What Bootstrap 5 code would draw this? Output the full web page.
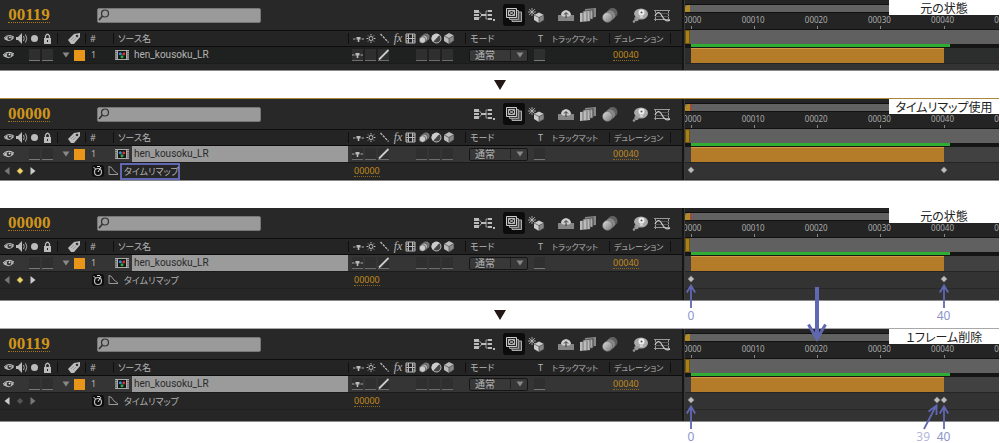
<!DOCTYPE html>
<html lang="ja">
<head>
<meta charset="utf-8">
<meta name="viewport" content="width=device-width, initial-scale=1">
<title>タイムリマップ</title>
<link href="https://cdn.jsdelivr.net/npm/bootstrap@5.3.0/dist/css/bootstrap.min.css" rel="stylesheet">
<style>
:root{--amber:#c08a1c;--note:#6068b2;--ink:#b4b4b4}
body{font-family:"Noto Sans","Noto Sans CJK JP",sans-serif;font-size:9px;line-height:12px;color:var(--ink);background:#fff;overflow-x:hidden}
svg{display:block;flex:none}
button{color:inherit}
.jp{font-family:"Noto Sans CJK JP",sans-serif;font-feature-settings:"palt"}
.panel{position:relative;display:flex;margin-right:1px;background:#262626;border-bottom:1px solid #8a8a8a}
.panel.edge-gold{border-top:1px solid #a98a3c}
.panel.edge-gray{border-top:1px solid #a8a8a8}
.over{z-index:2}
.outline-side{flex:0 0 684px;border-right:2px solid #151515}
.tall .outline-side{padding-bottom:11px}
.toolbar{height:31px;border-bottom:1px solid #0e0e0e;background:#282828;padding-left:8px}
.code{width:42px;font:bold 17px/15px "Liberation Serif",serif;color:#cf951b;border:0;border-bottom:1px dotted #a87818;background:none;padding:0}
.finder{width:164px;height:15px;margin-left:47px;background:#9a9a9a;border-radius:2px;border:1px solid #777;color:#222}
.finder input{min-width:0;border:0;background:none;font-size:9px;outline:0;padding:0}
.tools{margin-left:auto;padding-right:9px}
.tool{border:0;background:none;padding:0;width:22px;height:22px;display:flex;align-items:center;justify-content:center}
.tool.on{background:#0c0c0c;border-radius:3px}
.cols{display:grid;grid-template-columns:57px 28px 28px 235px 117px 69px 14px 61px 61px 12px;align-items:center}
.heads{height:16px;background:#242424;border-bottom:1px solid #0c0c0c}
.heads>.sep{border-left:1px solid #0f0f0f;height:11px}
.heads>*{display:flex;align-items:center;height:11px;white-space:nowrap}
.fxh{font:italic 12px/11px "Liberation Serif",serif;width:14px;text-align:center}
.narrow{font-size:8px}
.layer{height:17px;background:#1f2120;border-bottom:1px solid #1b1b1b}
.layer.chosen{background:#353535}
.layer>*{height:16px;display:flex;align-items:center}
.visi{padding-left:3px;gap:14px}
.num{padding-left:6px}
.src{padding-left:2px}
.tbox{width:11px;overflow:hidden}
.layer-name{font-family:Roboto,sans-serif;font-size:10px;line-height:16px;margin-left:3px;padding-left:2px;flex:1;white-space:nowrap}
.chosen .layer-name{background:#9b9b9b;color:#2a2a2a}
.swatch{width:11px;height:11px;background:#e8951a}
.mode{width:59px;height:13px;border:1px solid #151515;border-radius:2px;background:#383838;color:var(--ink);font-size:10px;line-height:10px;padding:0 0 0 5px;appearance:none;margin-left:4px}
.pick{position:relative}
.pick svg{position:absolute;right:10px;top:4px;pointer-events:none}
.pick::after{content:"";position:absolute;right:23px;top:3px;height:10px;border-left:1px solid #222}
.value{color:var(--amber);border-bottom:1px dotted #8c6719;text-decoration:none;line-height:10px;font-size:9px}
.prop{height:17px;border-bottom:1px solid #202020}
.prop button{border:0;background:none;padding:0}
.keynav{display:flex;align-items:center;gap:6px;padding-left:4px;width:92px;color:#ccc}
.dim{color:#777}
.gold{color:#f0d468}
.off{color:#555}
.curve{margin:0 2px 0 4px}
.pv{margin-left:174px}
.prop .watch{background:#0d0d0d;border-radius:3px}
.prop-name{font-size:9px;line-height:13px;border:2px solid transparent;padding:0 2px;width:60px;white-space:nowrap}
.prop-name.marked{border-color:var(--note)}
.time-side{flex:1;min-width:0;background:#333;border-left:1px solid #3a3a3a;position:relative}
.ruler{height:30px;overflow:hidden;background:#242424;border-bottom:1px solid #111}
.nav-range{height:9px;margin-top:4px;display:flex;background:#626262;border-bottom:1px solid #111;border-top:1px solid #111}
.grip{width:5px;margin-right:1px;background:#b18a25;border-top-left-radius:4px}
.marks{position:relative;margin-left:6px;height:17px}
.marks span{position:absolute;bottom:0;width:24px;margin-left:-13px;text-align:center;font-size:8px;line-height:9px;color:#aaa;padding-bottom:6px}
.marks span::after{content:"";position:absolute;bottom:0;left:13px;height:4px;border-left:1px solid #888}
.work{height:14px;display:flex;background:#606060}
.work .end{width:5px;margin-right:1px;background:#a88018;border:1px solid #6f5510}
.cache{height:4px;background:#151515;padding-left:6px}
.cache div{width:84%;height:3px;background:#2fae33}
.lane{height:16px;padding-left:6px;background:#2c2d2d;border-bottom:1px solid #252525}
.chosen-lane{background:#414141}
.lane .clip{width:82%;height:15px;background:#b47c29;border-top:1px solid #d09a48}
.foot{height:6px}
.keys{position:relative;margin-left:6px;height:17px}
.keys svg{position:absolute;overflow:visible}
.keys .key{top:3px;margin-left:-4px;color:#bbb}
.keys .pointer{top:12px;margin-left:-5px}
.keys .drop{top:15px;margin-left:-10px}
.keys .slant{top:10px;margin-left:-14px}
.stripe{position:absolute;left:-6px;right:0;top:0;height:17px;border-bottom:1px solid #282828}
.cursor{border-left:1px solid #d03030}
.note{position:absolute;top:38px;width:20px;margin-left:-10px;text-align:center;color:#8f93cb;font-size:12px;line-height:12px}
.note.left-shift{margin-left:-24px;color:#b4b7dc}
.caption{position:absolute;right:0;top:0;width:110px;height:15px;background:#fff;color:#222;font-size:12px;line-height:15px;text-align:center;white-space:nowrap}
.step{height:27px}
.tail{height:23px}
</style>
</head>
<body>
<svg width="0" height="0" class="position-absolute">
<defs>
<linearGradient id="g" x2="1" y2="1"><stop stop-color="#ddd"/><stop offset="1" stop-color="#777"/></linearGradient>
<symbol id="eye" viewBox="0 0 12 9"><path d="M0 5Q5-1 11 4Q7 9 2 6Z" fill="#b8b8b8"/><circle cx="6" cy="4" r="2.3" fill="#333"/><circle cx="6.5" cy="3.4" r=".9" fill="#eee"/><path d="M0 4Q5-1 11 3" fill="none" stroke="#ccc"/></symbol>
<symbol id="av" viewBox="0 0 57 11"><svg x="4" y="1" width="11" height="9"><use href="#eye"/></svg><path d="M16 4h2l4-4v11l-4-4h-2z" fill="#bbb"/><path d="M23.500 3q1.500 2.500 0 5M25.500 1.500q2.500 4 0 8" fill="none" stroke="#aaa"/><circle cx="34.500" cy="5.500" r="3.500" fill="#bbb"/><path d="M44 5h7v6h-7z" fill="#bbb"/><path d="M45.500 5V3q2-3.500 4 0v2" fill="none" stroke="#bbb" stroke-width="1.300"/><path d="M47 7h1v2h-1z" fill="#222"/></symbol>
<symbol id="tag" viewBox="0 0 13 11"><path d="M0 7 6 1l6-1 0 4-6 7H3z" fill="#bdbdbd"/><circle cx="9" cy="3" r="1.300" fill="#333"/><path d="M3 7l3-3M5 8l3-3" stroke="#777" stroke-width=".6"/></symbol>
<symbol id="shy" viewBox="0 0 11 11"><path d="M0 6h2.500M8.500 6H11" stroke="#aaa"/><path d="M3.500 4h4v2.500H6.300V9H4.700V6.500H3.500z" fill="#bbb"/></symbol>
<symbol id="sw1" viewBox="0 0 38 11"><use href="#shy" width="11" height="11"/><g stroke="#bbb"><circle cx="18" cy="5.500" r="2" fill="none"/><path d="M18 1v1.500M18 8.500V10M13.500 5.500H15M21 5.500h1.500M15 2.500l1 1M21 2.500l-1 1M15 8.500l1-1M21 8.500l-1-1"/><path d="M27.500 1l8 8.500" stroke-dasharray="2.500 1" stroke-width="1.300"/></g></symbol>
<symbol id="sw2" viewBox="0 0 51 11"><path d="M1 1h9v9H1z" fill="none" stroke="#bbb"/><path d="M3.500 1v9M7.500 1v9M4 5.500h4M1 3h2M1 5.500h2M1 8h2M8 3h2M8 5.500h2M8 8h2" stroke="#bbb"/><circle cx="21" cy="4" r="3.500" fill="#777"/><circle cx="19" cy="5.500" r="3.500" fill="#bbb" stroke="#333" stroke-width=".6"/><circle cx="17.500" cy="7" r="3.300" fill="#ccc" stroke="#333" stroke-width=".6"/><circle cx="31.500" cy="5.500" r="4.500" fill="#444" stroke="#bbb"/><path d="M28 9A4.500 4.500 0 0 1 34.500 2z" fill="#ccc"/><path d="M39 3l5-3 5 2.500v5L44 11l-5-3z" fill="#bbb"/><path d="M39 3l5 2.500V11l5-3.500v-5L44 5.500" fill="#888" stroke="#333" stroke-width=".6"/></symbol>
<symbol id="boxes" viewBox="0 0 25 12"><path d="M0 0h11v11H0zM13 0h11v11H13z" fill="#2f2f2f"/><path d="M0 11.500h11M13 11.500h11" stroke="#777"/></symbol>
<symbol id="lsw" viewBox="0 0 104 12"><path d="M0 0h11v11H0zM13 0h11v11H13zM26 0h11v11H26zM64 0h11v11H64zM77 0h11v11H77zM90 0h11v11H90z" fill="#2f2f2f"/><path d="M0 11.500h11M13 11.500h11M26 11.500h11M64 11.500h11M77 11.500h11M90 11.500h11" stroke="#6d6d6d"/><use href="#shy" width="11" height="11"/><path d="M27 10.500 36.500 1" stroke="#ccc" stroke-width="1.800"/></symbol>
<symbol id="comp" viewBox="0 0 14 10"><path d="M0 0h14v10H0z" fill="#aaa"/><path d="M3 1h8v8H3z" fill="#161616"/><path d="M1 1v8M13 1v8" stroke="#222" stroke-dasharray="1.200 1"/><circle cx="5.300" cy="3.700" r="1.500" fill="#2a8fd0"/><circle cx="8.800" cy="4" r="1.400" fill="#d33"/><circle cx="7" cy="6.700" r="1.500" fill="#2aa94a"/></symbol>
<symbol id="lens" viewBox="0 0 12 12"><circle cx="7" cy="4.500" r="3.500" fill="none" stroke="#333" stroke-width="1.200"/><path d="M4.500 7 1 11" stroke="#333" stroke-width="1.700"/></symbol>
<symbol id="down" viewBox="0 0 8 8"><path d="M.5 1.500h7L4 6.500z" fill="#888"/></symbol>
<symbol id="t1" viewBox="0 0 21 12"><path d="M0 1h5v3H0zM0 5h5v2H0zM0 8h5v3H0zM14 1h4v2h-4zM14 5h4v2h-4zM14 9h4v2h-4zM19 10h2v2h-2z" fill="#bbb"/><path d="M5 2.500l3 3.500-3 3.500M14 2h-2v8h2M12 6h2" stroke="#999" fill="none"/><path d="M7 5h5v2H7z" fill="#bbb"/></symbol>
<symbol id="t2" viewBox="0 0 16 14"><path d="M7 4h8.500v9.500H6V10" fill="#555" stroke="#aaa"/><path d="M3.500 2.500h9v9h-9z" fill="#444" stroke="#999"/><path d="M.5.5h10v9H.5z" fill="#252525" stroke="#ccc"/><path d="M2.500 2.500l6 5M8.500 2.500l-6 5M2.500 2.500h6v5h-6z" fill="none" stroke="#bbb"/></symbol>
<symbol id="t3" viewBox="0 0 17 16"><path d="M4 1v8M0 5h8M1 2l6 6M7 2 1 8" stroke="#bbb" stroke-width=".8"/><path d="M6 8l5-2.500L16 8v5l-5 3-5-3z" fill="#ccc"/><path d="M6 8l5 2.500V16l5-3V8l-5 2.500" fill="#888" stroke="#333" stroke-width=".6"/></symbol>
<symbol id="t4" viewBox="0 0 16 13"><path d="M0 6h16v6H0z" fill="#858585"/><path d="M3 6q0-4 5-5 5 1 5 5l-2 1.500H5z" fill="#cfcfcf"/><path d="M8 9V4M6 5.500 8 3.500l2 2" stroke="#333" fill="none"/></symbol>
<symbol id="t5" viewBox="0 0 17 14"><path d="M5 1l11-1v9L5 10z" fill="#888"/><path d="M3 3l10-1v9L3 12z" fill="#aaa" stroke="#333" stroke-width=".6"/><path d="M0 5l10-1v9L0 14z" fill="#bbb"/><path d="M3 4v10M7 4v9M10 3v9M13 1v9" stroke="#555" stroke-width=".7"/></symbol>
<symbol id="t6" viewBox="0 0 16 15"><circle cx="10.500" cy="5" r="5" fill="#606060"/><circle cx="8" cy="7.500" r="5" fill="#888"/><circle cx="5.500" cy="9.500" r="5" fill="url(#g)" stroke="#555" stroke-width=".5"/></symbol>
<symbol id="t7" viewBox="0 0 17 15"><path d="M2 6a7 5.500 0 1 1 7 5.500Q4 12 2 6" fill="#aaa"/><circle cx="4.500" cy="11" r="2.300" fill="#999"/><circle cx="2" cy="13.500" r="1.300" fill="#999"/><circle cx="9.500" cy="4.500" r="3" fill="#eee"/><path d="M8 7h3v3H8z" fill="#ccc"/><circle cx="9.500" cy="4.500" r="1" fill="#555"/></symbol>
<symbol id="t8" viewBox="0 0 17 13"><path d="M0 1.500h16M0 10.500h16M1.500 1v11M14.500 1v11" stroke="#999"/><path d="M1 4.500h14M1 7.500h14" stroke="#555"/><path d="M1 7q3.500-7 7 0t8 4" fill="none" stroke="#ccc" stroke-width="1.200"/></symbol>
<symbol id="stop" viewBox="0 0 12 12"><circle cx="6" cy="7" r="3.500" fill="none" stroke="#bbb" stroke-width="1.200"/><path d="M6 7l3-5M1.500 2l2 2M5 1.500h3" stroke="#ddd"/></symbol>
<symbol id="graph" viewBox="0 0 10 10"><path d="M1 0v8.500h9M1 1l2 0 3 4 4 3" fill="none" stroke="#999"/></symbol>
<symbol id="kl" viewBox="0 0 6 8"><path d="M5.500 0v8L.5 4z" fill="currentColor"/></symbol>
<symbol id="kr" viewBox="0 0 6 8"><path d="M.5 0v8l5-4z" fill="currentColor"/></symbol>
<symbol id="dia" viewBox="0 0 8 8"><path d="M4 .5 7.500 4 4 7.500.5 4z" fill="currentColor" stroke="#222" stroke-width=".6"/></symbol>
<symbol id="up" viewBox="0 0 10 24"><path d="M5 24V2M.8 8.500 5 1.500 9.200 8.500" fill="none" stroke="#6068b2" stroke-width="1.800"/></symbol>
<symbol id="wedge" viewBox="0 0 12 10"><path d="M0 0h12L6 10z" fill="#231815"/></symbol>
</defs>
</svg>

<main>
<!-- 1: no remap -->
<section class="panel">
  <div class="outline-side">
    <div class="toolbar d-flex align-items-center">
      <button class="code">00119</button>
      <label class="finder d-flex align-items-center"><svg width="12" height="12"><use href="#lens"/></svg><input class="flex-fill" type="search" aria-label="検索"></label>
      <div class="tools d-flex align-items-center"><button class="tool me-2" aria-label="フローチャート"><svg width="21" height="12"><use href="#t1"/></svg></button><button class="tool on" aria-label="ライブ更新"><svg width="16" height="14"><use href="#t2"/></svg></button><button class="tool me-2" aria-label="ドラフト3D"><svg width="17" height="16"><use href="#t3"/></svg></button><button class="tool" aria-label="シャイ"><svg width="16" height="13"><use href="#t4"/></svg></button><button class="tool" aria-label="フレームブレンド"><svg width="17" height="14"><use href="#t5"/></svg></button><button class="tool me-2" aria-label="モーションブラー"><svg width="16" height="15"><use href="#t6"/></svg></button><button class="tool" aria-label="ブレインストーム"><svg width="17" height="15"><use href="#t7"/></svg></button><button class="tool" aria-label="グラフエディタ"><svg width="17" height="13"><use href="#t8"/></svg></button></div>
    </div>
    <div class="cols heads">
      <svg width="57" height="11"><use href="#av"/></svg>
      <span class="sep justify-content-end pe-1"><svg width="13" height="11"><use href="#tag"/></svg></span>
      <span class="sep ps-1">#</span>
      <span class="sep jp ps-1">ソース名</span>
      <span class="sep ps-1"><svg width="38" height="11"><use href="#sw1"/></svg><em class="fxh">fx</em><svg width="51" height="11"><use href="#sw2"/></svg></span>
      <span class="sep jp ps-1">モード</span><span class="ps-1">T</span><span class="jp ps-1 narrow">トラックマット</span><span class="sep jp ps-1 narrow">デュレーション</span><span class="sep"></span>
    </div>
    <div class="cols layer">
      <div class="visi"><svg width="12" height="9"><use href="#eye"/></svg><svg width="25" height="12"><use href="#boxes"/></svg></div>
      <div class="justify-content-end gap-1"><svg width="8" height="8"><use href="#down"/></svg><span class="swatch"></span></div>
      <div class="num">1</div>
      <div class="src"><svg width="14" height="10"><use href="#comp"/></svg><span class="layer-name">hen_kousoku_LR</span></div>
      <div class="ps-1"><svg width="104" height="12"><use href="#lsw"/></svg></div>
      <div class="pick"><select class="mode jp" aria-label="モード"><option>通常</option></select><svg width="8" height="8"><use href="#down"/></svg></div>
      <div class="tbox"><svg width="25" height="12"><use href="#boxes"/></svg></div>
      <div></div>
      <div class="ps-1"><a href="#" class="value">00040</a></div>
    </div>
  </div>
  <div class="time-side">
    <div class="ruler"><div class="nav-range"><span class="grip"></span></div><div class="marks"><span style="left:0%">00000</span><span style="left:20.5%">00010</span><span style="left:41%">00020</span><span style="left:61.5%">00030</span><span style="left:82%">00040</span><span style="left:102.5%">00050</span></div></div>
    <div class="work"><span class="end"></span></div>
    <div class="cache"><div></div></div>
    <div class="lane"><div class="clip"></div></div>
    <div class="foot"></div>
  </div>
  <div class="caption jp">元の状態</div>
</section>
<div class="step d-flex justify-content-center align-items-center"><svg width="12" height="10"><use href="#wedge"/></svg></div>

<!-- 2: remap enabled -->
<section class="panel edge-gold">
  <div class="outline-side">
    <div class="toolbar d-flex align-items-center">
      <button class="code">00000</button>
      <label class="finder d-flex align-items-center"><svg width="12" height="12"><use href="#lens"/></svg><input class="flex-fill" type="search" aria-label="検索"></label>
      <div class="tools d-flex align-items-center"><button class="tool me-2" aria-label="フローチャート"><svg width="21" height="12"><use href="#t1"/></svg></button><button class="tool on" aria-label="ライブ更新"><svg width="16" height="14"><use href="#t2"/></svg></button><button class="tool me-2" aria-label="ドラフト3D"><svg width="17" height="16"><use href="#t3"/></svg></button><button class="tool" aria-label="シャイ"><svg width="16" height="13"><use href="#t4"/></svg></button><button class="tool" aria-label="フレームブレンド"><svg width="17" height="14"><use href="#t5"/></svg></button><button class="tool me-2" aria-label="モーションブラー"><svg width="16" height="15"><use href="#t6"/></svg></button><button class="tool" aria-label="ブレインストーム"><svg width="17" height="15"><use href="#t7"/></svg></button><button class="tool" aria-label="グラフエディタ"><svg width="17" height="13"><use href="#t8"/></svg></button></div>
    </div>
    <div class="cols heads">
      <svg width="57" height="11"><use href="#av"/></svg>
      <span class="sep justify-content-end pe-1"><svg width="13" height="11"><use href="#tag"/></svg></span>
      <span class="sep ps-1">#</span>
      <span class="sep jp ps-1">ソース名</span>
      <span class="sep ps-1"><svg width="38" height="11"><use href="#sw1"/></svg><em class="fxh">fx</em><svg width="51" height="11"><use href="#sw2"/></svg></span>
      <span class="sep jp ps-1">モード</span><span class="ps-1">T</span><span class="jp ps-1 narrow">トラックマット</span><span class="sep jp ps-1 narrow">デュレーション</span><span class="sep"></span>
    </div>
    <div class="cols layer chosen">
      <div class="visi"><svg width="12" height="9"><use href="#eye"/></svg><svg width="25" height="12"><use href="#boxes"/></svg></div>
      <div class="justify-content-end gap-1"><svg width="8" height="8"><use href="#down"/></svg><span class="swatch"></span></div>
      <div class="num">1</div>
      <div class="src"><svg width="14" height="10"><use href="#comp"/></svg><span class="layer-name">hen_kousoku_LR</span></div>
      <div class="ps-1"><svg width="104" height="12"><use href="#lsw"/></svg></div>
      <div class="pick"><select class="mode jp" aria-label="モード"><option>通常</option></select><svg width="8" height="8"><use href="#down"/></svg></div>
      <div class="tbox"><svg width="25" height="12"><use href="#boxes"/></svg></div>
      <div></div>
      <div class="ps-1"><a href="#" class="value">00040</a></div>
    </div>
    <div class="prop d-flex align-items-center">
      <div class="keynav"><button class="dim" aria-label="前へ"><svg width="6" height="8"><use href="#kl"/></svg></button><button class="gold" aria-label="キー"><svg width="8" height="8"><use href="#dia"/></svg></button><button aria-label="次へ"><svg width="6" height="8"><use href="#kr"/></svg></button></div>
      <button class="watch" aria-label="ストップウォッチ"><svg width="12" height="12"><use href="#stop"/></svg></button>
      <svg class="curve" width="10" height="10"><use href="#graph"/></svg>
      <span class="prop-name jp marked">タイムリマップ</span>
      <a href="#" class="value pv">00000</a>
    </div>
  </div>
  <div class="time-side">
    <div class="ruler"><div class="nav-range"><span class="grip"></span><span class="cursor"></span></div><div class="marks"><span style="left:0%">00000</span><span style="left:20.5%">00010</span><span style="left:41%">00020</span><span style="left:61.5%">00030</span><span style="left:82%">00040</span><span style="left:102.5%">00050</span></div></div>
    <div class="work"><span class="end"></span></div>
    <div class="cache"><div></div></div>
    <div class="lane chosen-lane"><div class="clip"></div></div>
    <div class="keys"><div class="stripe"></div><svg class="key" style="left:0%" width="8" height="8"><use href="#dia"/></svg><svg class="key" style="left:82%" width="8" height="8"><use href="#dia"/></svg></div>
  </div>
  <div class="caption jp">タイムリマップ使用</div>
</section>
<div class="step"></div>

<!-- 3: before the frame is removed -->
<section class="panel over tall">
  <div class="outline-side">
    <div class="toolbar d-flex align-items-center">
      <button class="code">00000</button>
      <label class="finder d-flex align-items-center"><svg width="12" height="12"><use href="#lens"/></svg><input class="flex-fill" type="search" aria-label="検索"></label>
      <div class="tools d-flex align-items-center"><button class="tool me-2" aria-label="フローチャート"><svg width="21" height="12"><use href="#t1"/></svg></button><button class="tool on" aria-label="ライブ更新"><svg width="16" height="14"><use href="#t2"/></svg></button><button class="tool me-2" aria-label="ドラフト3D"><svg width="17" height="16"><use href="#t3"/></svg></button><button class="tool" aria-label="シャイ"><svg width="16" height="13"><use href="#t4"/></svg></button><button class="tool" aria-label="フレームブレンド"><svg width="17" height="14"><use href="#t5"/></svg></button><button class="tool me-2" aria-label="モーションブラー"><svg width="16" height="15"><use href="#t6"/></svg></button><button class="tool" aria-label="ブレインストーム"><svg width="17" height="15"><use href="#t7"/></svg></button><button class="tool" aria-label="グラフエディタ"><svg width="17" height="13"><use href="#t8"/></svg></button></div>
    </div>
    <div class="cols heads">
      <svg width="57" height="11"><use href="#av"/></svg>
      <span class="sep justify-content-end pe-1"><svg width="13" height="11"><use href="#tag"/></svg></span>
      <span class="sep ps-1">#</span>
      <span class="sep jp ps-1">ソース名</span>
      <span class="sep ps-1"><svg width="38" height="11"><use href="#sw1"/></svg><em class="fxh">fx</em><svg width="51" height="11"><use href="#sw2"/></svg></span>
      <span class="sep jp ps-1">モード</span><span class="ps-1">T</span><span class="jp ps-1 narrow">トラックマット</span><span class="sep jp ps-1 narrow">デュレーション</span><span class="sep"></span>
    </div>
    <div class="cols layer chosen">
      <div class="visi"><svg width="12" height="9"><use href="#eye"/></svg><svg width="25" height="12"><use href="#boxes"/></svg></div>
      <div class="justify-content-end gap-1"><svg width="8" height="8"><use href="#down"/></svg><span class="swatch"></span></div>
      <div class="num">1</div>
      <div class="src"><svg width="14" height="10"><use href="#comp"/></svg><span class="layer-name">hen_kousoku_LR</span></div>
      <div class="ps-1"><svg width="104" height="12"><use href="#lsw"/></svg></div>
      <div class="pick"><select class="mode jp" aria-label="モード"><option>通常</option></select><svg width="8" height="8"><use href="#down"/></svg></div>
      <div class="tbox"><svg width="25" height="12"><use href="#boxes"/></svg></div>
      <div></div>
      <div class="ps-1"><a href="#" class="value">00040</a></div>
    </div>
    <div class="prop d-flex align-items-center">
      <div class="keynav"><button class="dim" aria-label="前へ"><svg width="6" height="8"><use href="#kl"/></svg></button><button class="gold" aria-label="キー"><svg width="8" height="8"><use href="#dia"/></svg></button><button aria-label="次へ"><svg width="6" height="8"><use href="#kr"/></svg></button></div>
      <button class="watch" aria-label="ストップウォッチ"><svg width="12" height="12"><use href="#stop"/></svg></button>
      <svg class="curve" width="10" height="10"><use href="#graph"/></svg>
      <span class="prop-name jp">タイムリマップ</span>
      <a href="#" class="value pv">00000</a>
    </div>
  </div>
  <div class="time-side">
    <div class="ruler"><div class="nav-range"><span class="grip"></span><span class="cursor"></span></div><div class="marks"><span style="left:0%">00000</span><span style="left:20.5%">00010</span><span style="left:41%">00020</span><span style="left:61.5%">00030</span><span style="left:82%">00040</span><span style="left:102.5%">00050</span></div></div>
    <div class="work"><span class="end"></span></div>
    <div class="cache"><div></div></div>
    <div class="lane chosen-lane"><div class="clip"></div></div>
    <div class="keys"><div class="stripe"></div><svg class="key" style="left:0%" width="8" height="8"><use href="#dia"/></svg><svg class="key" style="left:82%" width="8" height="8"><use href="#dia"/></svg>
      <svg class="pointer" style="left:0%" width="10" height="24"><use href="#up"/></svg><span class="note" style="left:0%">0</span>
      <svg class="pointer" style="left:82%" width="10" height="24"><use href="#up"/></svg><span class="note" style="left:82%">40</span>
      <svg class="drop" style="left:41%" width="20" height="56" viewBox="0 0 20 56"><path d="M10 0v51" stroke="#6068b2" stroke-width="4"/><path d="M1.500 37.500 10 52l8.500-14.500" fill="none" stroke="#6068b2" stroke-width="3"/></svg></div>
  </div>
  <div class="caption jp">元の状態</div>
</section>
<div class="step d-flex justify-content-center align-items-center"><svg width="12" height="10"><use href="#wedge"/></svg></div>

<!-- 4: one frame removed -->
<section class="panel edge-gray tall">
  <div class="outline-side">
    <div class="toolbar d-flex align-items-center">
      <button class="code">00119</button>
      <label class="finder d-flex align-items-center"><svg width="12" height="12"><use href="#lens"/></svg><input class="flex-fill" type="search" aria-label="検索"></label>
      <div class="tools d-flex align-items-center"><button class="tool me-2" aria-label="フローチャート"><svg width="21" height="12"><use href="#t1"/></svg></button><button class="tool on" aria-label="ライブ更新"><svg width="16" height="14"><use href="#t2"/></svg></button><button class="tool me-2" aria-label="ドラフト3D"><svg width="17" height="16"><use href="#t3"/></svg></button><button class="tool" aria-label="シャイ"><svg width="16" height="13"><use href="#t4"/></svg></button><button class="tool" aria-label="フレームブレンド"><svg width="17" height="14"><use href="#t5"/></svg></button><button class="tool me-2" aria-label="モーションブラー"><svg width="16" height="15"><use href="#t6"/></svg></button><button class="tool" aria-label="ブレインストーム"><svg width="17" height="15"><use href="#t7"/></svg></button><button class="tool" aria-label="グラフエディタ"><svg width="17" height="13"><use href="#t8"/></svg></button></div>
    </div>
    <div class="cols heads">
      <svg width="57" height="11"><use href="#av"/></svg>
      <span class="sep justify-content-end pe-1"><svg width="13" height="11"><use href="#tag"/></svg></span>
      <span class="sep ps-1">#</span>
      <span class="sep jp ps-1">ソース名</span>
      <span class="sep ps-1"><svg width="38" height="11"><use href="#sw1"/></svg><em class="fxh">fx</em><svg width="51" height="11"><use href="#sw2"/></svg></span>
      <span class="sep jp ps-1">モード</span><span class="ps-1">T</span><span class="jp ps-1 narrow">トラックマット</span><span class="sep jp ps-1 narrow">デュレーション</span><span class="sep"></span>
    </div>
    <div class="cols layer chosen">
      <div class="visi"><svg width="12" height="9"><use href="#eye"/></svg><svg width="25" height="12"><use href="#boxes"/></svg></div>
      <div class="justify-content-end gap-1"><svg width="8" height="8"><use href="#down"/></svg><span class="swatch"></span></div>
      <div class="num">1</div>
      <div class="src"><svg width="14" height="10"><use href="#comp"/></svg><span class="layer-name">hen_kousoku_LR</span></div>
      <div class="ps-1"><svg width="104" height="12"><use href="#lsw"/></svg></div>
      <div class="pick"><select class="mode jp" aria-label="モード"><option>通常</option></select><svg width="8" height="8"><use href="#down"/></svg></div>
      <div class="tbox"><svg width="25" height="12"><use href="#boxes"/></svg></div>
      <div></div>
      <div class="ps-1"><a href="#" class="value">00040</a></div>
    </div>
    <div class="prop d-flex align-items-center">
      <div class="keynav"><button aria-label="前へ"><svg width="6" height="8"><use href="#kl"/></svg></button><button class="off" aria-label="キー"><svg width="8" height="8"><use href="#dia"/></svg></button><button class="dim" aria-label="次へ"><svg width="6" height="8"><use href="#kr"/></svg></button></div>
      <button class="watch" aria-label="ストップウォッチ"><svg width="12" height="12"><use href="#stop"/></svg></button>
      <svg class="curve" width="10" height="10"><use href="#graph"/></svg>
      <span class="prop-name jp">タイムリマップ</span>
      <a href="#" class="value pv">00000</a>
    </div>
  </div>
  <div class="time-side">
    <div class="ruler"><div class="nav-range"><span class="grip"></span></div><div class="marks"><span style="left:0%">00000</span><span style="left:20.5%">00010</span><span style="left:41%">00020</span><span style="left:61.5%">00030</span><span style="left:82%">00040</span><span style="left:102.5%">00050</span></div></div>
    <div class="work"><span class="end"></span></div>
    <div class="cache"><div></div></div>
    <div class="lane chosen-lane"><div class="clip"></div></div>
    <div class="keys"><div class="stripe"></div><svg class="key" style="left:0%" width="8" height="8"><use href="#dia"/></svg><svg class="key" style="left:79.95%" width="8" height="8"><use href="#dia"/></svg><svg class="key" style="left:82%" width="8" height="8"><use href="#dia"/></svg>
      <svg class="pointer" style="left:0%" width="10" height="24"><use href="#up"/></svg><span class="note" style="left:0%">0</span>
      <svg class="slant" style="left:79.95%" width="16" height="26" viewBox="0 0 16 26"><path d="M1 26 13 3M5.500 8.500 13.500 2.500 13.500 12" fill="none" stroke="#6068b2" stroke-width="1.800"/></svg><span class="note left-shift" style="left:79.95%">39</span>
      <svg class="pointer" style="left:82%" width="10" height="24"><use href="#up"/></svg><span class="note" style="left:82%">40</span></div>
  </div>
  <div class="caption jp">１フレーム削除</div>
</section>
<div class="tail"></div>
</main>
<script src="https://cdn.jsdelivr.net/npm/bootstrap@5.3.0/dist/js/bootstrap.bundle.min.js"></script>
</body>
</html>
